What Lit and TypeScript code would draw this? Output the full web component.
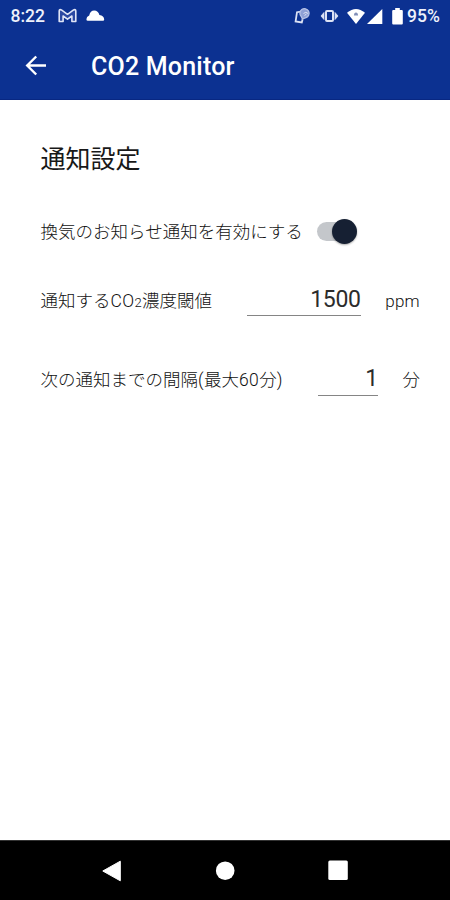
import { LitElement, html, css } from "lit";
import { customElement, property, state } from "lit/decorators.js";
import { classMap } from "lit/directives/class-map.js";

@customElement("status-bar")
class StatusBar extends LitElement {
  static styles = css`
    :host { display: flex; height: 32px; align-items: center; color: #eef1fb; font: 500 17.5px/32px Roboto, sans-serif; }
    .time { width: 35px; margin-left: 10.5px; white-space: nowrap; }
    .mail { margin-left: 12.5px; }
    .cloud { margin-left: 9px; }
    .right { margin-left: auto; display: flex; align-items: center; padding-right: 10px; }
    .cast { margin-right: 8px; }
    .vibrate { margin-right: 8px; }
    .battery { margin: 0 4px 0 8px; }
    .level { width: 33px; white-space: nowrap; }
    svg { display: block; flex: none; }
  `;
  render() {
    return html`
      <span class="time">8:22</span>
      <svg class="mail" width="19" height="16" viewBox="0 0 19 16" fill="#2c49a2" stroke="#e0e5f6" stroke-width="1.6" stroke-linejoin="round">
        <path d="M1.2 13.5V3.2Q1.2 1 3.4 1.9L9.5 6.3L15.6 1.9Q17.8 1 17.8 3.2V13.5H13.9V8L9.5 11.2L5.1 8V13.5Z" />
      </svg>
      <svg class="cloud" width="19" height="16" viewBox="0 0 19 16" fill="#fff">
        <path d="M1.8 12.8Q.4 12.8 .4 11.2Q.4 8.4 3.2 7.4Q4.3 2.6 8.2 2.5Q12.2 2.6 13.4 7Q18 7.8 18.2 11.4Q18.2 12.8 17 12.8Z" />
      </svg>
      <div class="right">
        <svg class="cast" width="18" height="18" viewBox="0 0 18 18" fill="none" stroke="#dbe1f4" stroke-width="1.8">
          <path d="M6.8 4.6L3 5.2L1.6 14.4L7.8 15.4L8.6 12.2" />
          <path d="M7.2 9.5A4.6 4.6 0 1 1 12 10.6L8.4 12Z" fill="#8fa1d6" stroke="#b6c2e6" stroke-width="1.3" />
          <path d="M9.5 6.5Q12 4 14 6.5M10.5 8.5L12.5 7" stroke="#dbe1f4" stroke-width="1" />
        </svg>
        <svg class="vibrate" width="19" height="14" viewBox="0 0 19 14" fill="none" stroke="#dce2f5" stroke-width="2">
          <rect x="6" y="2" width="7" height="10" rx="1" />
          <path d="M4 3.5L1 7L4 10.5ZM15 3.5L18 7L15 10.5Z" fill="#dce2f5" stroke-width=".8" stroke-linejoin="round" />
        </svg>
        <svg width="18" height="17" viewBox="0 0 18 17">
          <path d="M0 4.8Q9-2.8 18 4.8L9 16Z" fill="#fff" />
          <path d="M6.9 7.4Q7.1 4.4 9 4.4Q10.9 4.4 11.1 7.4Z" fill="#8290b8" />
        </svg>
        <svg class="signal" width="19" height="17" viewBox="0 0 19 17"><path d="M2 16L17.3 1V16Z" fill="#fff" /></svg>
        <svg class="battery" width="11" height="17" viewBox="0 0 11 17">
          <path d="M3.2 0H7.8V2H9.8Q10.8 2 10.8 3V15.4Q10.8 16.4 9.8 16.4H1.2Q.2 16.4 .2 15.4V3Q.2 2 1.2 2H3.2Z" fill="#fff" />
        </svg>
        <span class="level">95%</span>
      </div>
    `;
  }
}

@customElement("toggle-switch")
class ToggleSwitch extends LitElement {
  @property({ type: Boolean }) on = false;
  static styles = css`
    :host { display: block; }
    .track { display: flex; align-items: center; width: 38px; height: 19px; border-radius: 10px; background: #c4c7cb; }
    .thumb { width: 25px; height: 25px; flex: none; border-radius: 50%; background: #162033; box-shadow: 0 1px 2px #0005; }
    .on .thumb { margin-left: 14.5px; }
  `;
  render() {
    return html`<div class=${classMap({ track: true, on: this.on })}><div class="thumb"></div></div>`;
  }
}

@customElement("app-root")
class AppRoot extends LitElement {
  @state() private threshold = "1500";
  @state() private interval = "1";

  static styles = css`
    :host { display: flex; flex-direction: column; height: 900px; background: #fff; color: #111; font-family: Roboto, "Noto Sans CJK JP", sans-serif; overflow: hidden; }
    .top { height: 100px; flex: none; background: #0c3191; box-sizing: border-box; border-bottom: 1px solid #082782; }
    .appbar { display: flex; align-items: center; height: 68px; color: #fff; }
    .back { margin-left: 23.5px; display: block; }
    .title { margin: 2px 0 0 43.5px; font-size: 25px; font-weight: 500; line-height: 36px; letter-spacing: .2px; white-space: nowrap; }
    main { flex: 1; padding: 40px 30px 0 40.5px; }
    h2 { margin: 0; font-size: 25px; line-height: 40px; font-weight: 400; color: #181818; }
    .row { display: flex; align-items: center; height: 40px; font-size: 17.5px; font-weight: 300; white-space: nowrap; }
    .enable { margin-top: 30px; }
    .threshold { margin-top: 29px; }
    .interval { margin-top: 39px; }
    .switch { margin: 3px 0 0 14.5px; }
    .latin { letter-spacing: .4px; }
    .sub { font-size: 13px; letter-spacing: .3px; }
    .value { box-sizing: border-box; height: 35px; margin: 0 0 1px auto; border-bottom: 1px solid #858585; color: #2c2c2c; font-size: 23px; line-height: 38px; text-align: right; font-weight: 400; letter-spacing: -.3px; }
    .wide { width: 114px; }
    .narrow { width: 60px; height: 36px; margin-bottom: 0; }
    .unit { margin-left: 24.5px; }
    .ppm { margin-top: 3px; font-size: 17px; letter-spacing: .3px; }
    nav { height: 60px; flex: none; background: #000; display: flex; justify-content: space-between; align-items: center; padding: 0 101px; box-sizing: border-box; border-top: 1px solid #333; }
    nav svg { display: block; }
  `;

  render() {
    return html`
      <header class="top">
        <status-bar></status-bar>
        <div class="appbar">
          <svg class="back" width="24" height="24" viewBox="0 0 24 24" fill="none" stroke="#fff" stroke-width="2.4">
            <path d="M22 11.5H3.2M12.2 2.5L3.2 11.5L12.2 20.5" />
          </svg>
          <span class="title">CO2 Monitor</span>
        </div>
      </header>
      <main>
        <h2>通知設定</h2>
        <div class="row enable">
          <span>換気のお知らせ通知を有効にする</span>
          <toggle-switch class="switch" on></toggle-switch>
        </div>
        <div class="row threshold">
          <span>通知する<span class="latin">CO</span><span class="sub">2</span>濃度閾値</span>
          <span class="value wide">${this.threshold}</span>
          <span class="unit ppm">ppm</span>
        </div>
        <div class="row interval">
          <span>次の通知までの間隔<span class="latin">(</span>最大<span class="latin">60</span>分)</span>
          <span class="value narrow">${this.interval}</span>
          <span class="unit">分</span>
        </div>
      </main>
      <nav>
        <svg width="21" height="22" viewBox="0 0 21 22"><path d="M1.8 11L19.3 1.2V20.8Z" fill="#fff" stroke="#fff" stroke-linejoin="round" /></svg>
        <svg width="20" height="20" viewBox="0 0 20 20"><circle cx="10.2" cy="9.7" r="9.3" fill="#fff" /></svg>
        <svg width="22" height="22" viewBox="0 0 22 22"><rect x="1.3" y=".6" width="19.5" height="19.5" rx="1.5" fill="#fff" /></svg>
      </nav>
    `;
  }
}
